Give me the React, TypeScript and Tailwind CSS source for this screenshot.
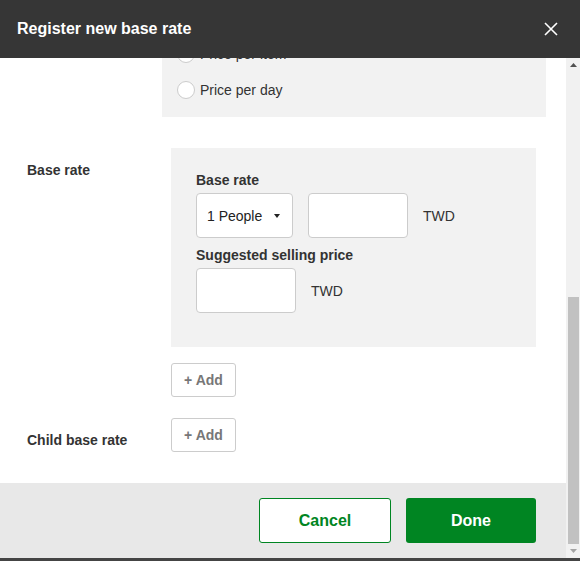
import { useLayoutEffect, useRef } from "react";

const font = { fontFamily: '"Liberation Sans", Arial, sans-serif' };

const Row: React.FC<{ label?: string; children: React.ReactNode }> = ({ label, children }) => {
  return (
    <div className="flex">
      <div className="w-[144px] shrink-0 pt-3 text-sm leading-5 font-bold text-[#333]">{label}</div>
      <div className="flex-1">{children}</div>
    </div>
  );
};

const TextBox: React.FC<{ w?: string }> = ({ w = "w-[100px]" }) => (
  <div className={`${w} h-[45px] rounded-[4px] border border-[#ccc] bg-white`}></div>
);

const Radio: React.FC<{ label: string }> = ({ label }) => (
  <div className="flex items-center h-[18px]">
    <span className="w-[18px] h-[18px] rounded-full border border-[#ccc] bg-white"></span>
    <span className="ml-[5px] text-sm text-[#333]">{label}</span>
  </div>
);

const AddButton = () => (
  <button className="w-[65px] h-[34px] rounded-[3px] border border-[#ccc] bg-white text-sm font-bold text-[#777]">
    + Add
  </button>
);

// classic scrollbar look, the page is scrolled to its bottom
const ScrollBar = () => (
  <div className="w-[14px] shrink-0 flex flex-col bg-[#f1f1f1]">
    <div className="h-[14px] flex items-center justify-center">
      <svg width="7" height="4" viewBox="0 0 7 4">
        <path d="M0 4L3.5 0L7 4Z" fill="#505050" />
      </svg>
    </div>
    <div className="flex-1 flex flex-col justify-end">
      <div className="h-[247px] ml-[2px] mr-[1px] bg-[#c1c1c1]"></div>
    </div>
    <div className="h-[14px] flex items-center justify-center">
      <svg width="7" height="4" viewBox="0 0 7 4">
        <path d="M0 0L7 0L3.5 4Z" fill="#a3a3a3" />
      </svg>
    </div>
  </div>
);

export default function App() {
  const scroller = useRef<HTMLDivElement>(null);

  useLayoutEffect(() => {
    if (scroller.current) scroller.current.scrollTop = scroller.current.scrollHeight;
  }, []);

  return (
    <div className="h-[561px] bg-[#444]" style={font}>
      <div className="h-[558px] flex flex-col bg-white">
        <div className="h-[58px] shrink-0 flex items-center justify-between bg-[#363636] pl-[17px] pr-[22px]">
          <h1 className="text-base font-bold text-white">Register new base rate</h1>
          <svg width="14" height="14" viewBox="0 0 14 14" className="text-white">
            <path d="M1 1L13 13M13 1L1 13" stroke="currentColor" strokeWidth="1.6" />
          </svg>
        </div>

        <div className="flex-1 min-h-0 flex">
          <div ref={scroller} className="flex-1 overflow-hidden">
            <div className="flex flex-col gap-[31px] pl-[27px] pr-[30px] pt-2">
              <Row label="Base rate name">
                <TextBox w="w-full" />
              </Row>
              <Row label="Valid from">
                <TextBox w="w-[160px]" />
              </Row>
              <Row label="Valid until">
                <TextBox w="w-[160px]" />
              </Row>
              <Row label="Currency">
                <div className="flex items-center gap-[15px]">
                  <TextBox w="w-[100px]" />
                  <span className="text-sm text-[#333]">TWD</span>
                </div>
              </Row>
              <Row label="Tax">
                <TextBox w="w-[100px]" />
              </Row>
              <Row label="Price type">
                <div className="-ml-[9px] -mr-[10px] flex flex-col gap-[18px] bg-[#f2f2f2] px-[15px] py-[18px]">
                  <Radio label="Price per person" />
                  <Radio label="Price per item" />
                  <Radio label="Price per day" />
                </div>
              </Row>

              <Row label="Base rate">
                <div className="bg-[#f2f2f2] pl-[25px] pt-[22px] pb-[34px]">
                  <div className="text-sm leading-5 font-bold text-[#333]">Base rate</div>
                  <div className="mt-[3px] flex items-center gap-[15px]">
                    <div className="w-[97px] h-[45px] rounded-[4px] border border-[#ccc] bg-white flex items-center justify-between pl-[10px] pr-[12px]">
                      <span className="text-sm text-[#222]">1 People</span>
                      <span className="w-0 h-0 border-l-[3.5px] border-r-[3.5px] border-t-[4px] border-l-transparent border-r-transparent border-t-[#222]"></span>
                    </div>
                    <TextBox />
                    <span className="text-sm text-[#333]">TWD</span>
                  </div>
                  <div className="mt-[7px] text-sm leading-5 font-bold text-[#333]">Suggested selling price</div>
                  <div className="mt-[3px] flex items-center gap-[15px]">
                    <TextBox />
                    <span className="text-sm text-[#333]">TWD</span>
                  </div>
                </div>
                <div className="mt-4">
                  <AddButton />
                </div>
              </Row>

              <div className="-mt-[10px]">
                <Row label="Child base rate">
                  <AddButton />
                </Row>
              </div>
            </div>

            <div className="mt-[31px] h-[75px] bg-[#e8e8e8] flex items-start justify-end gap-[15px] pt-[15px] pr-[30px]">
              <button className="w-[132px] h-[45px] rounded-[3px] border border-[#008522] bg-white text-base font-bold text-[#008522]">
                Cancel
              </button>
              <button className="w-[130px] h-[45px] rounded-[3px] bg-[#008522] text-base font-bold text-white">
                Done
              </button>
            </div>
          </div>
          <ScrollBar />
        </div>
      </div>
    </div>
  );
}
